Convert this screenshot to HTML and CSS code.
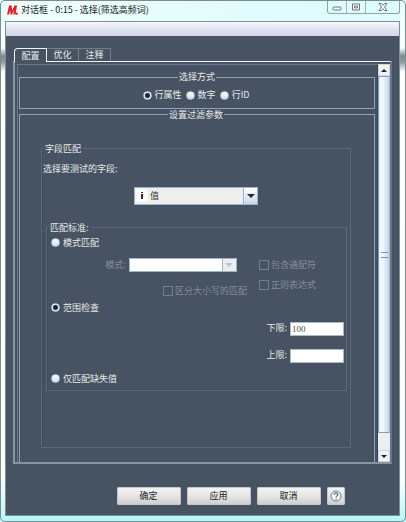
FILE: index.html
```
<!DOCTYPE html>
<html lang="zh-CN">
<head>
  <meta charset="UTF-8">
  <meta name="viewport" content="width=device-width, initial-scale=1.0">
  <title>对话框 - 0:15 - 选择(筛选高频词)</title>
  <link rel="stylesheet" href="styles.css">
</head>
<body>
  <header class="titlebar">
    <svg class="logo" width="11" height="11" viewBox="0 0 11 10">
      <path d="M2 0H4.600L5.100 5L7.500 0H10L8.600 9H6.200L7 4.500L5 9H3.600L3 4.500L2.200 9H0Z" fill="#d9202c"/>
      <circle cx="9.800" cy="8.200" r="1.100" fill="#d9202c"/>
    </svg>
    <h1>对话框 - 0:15 - 选择(筛选高频词)</h1>
    <div class="window-buttons">
      <button aria-label="最小化">
        <svg width="10" height="8" viewBox="0 0 10 8"><rect x="1" y="4" width="8" height="3" rx="1" fill="#fff" stroke="#6c7479"/></svg>
      </button>
      <button aria-label="最大化">
        <svg width="10" height="8" viewBox="0 0 10 8"><path d="M1.500 1h7v6h-7zM3.500 3v2h3V3z" fill="#fff" fill-rule="evenodd" stroke="#6c7479"/></svg>
      </button>
      <button class="close" aria-label="关闭">
        <svg width="10" height="8" viewBox="0 0 10 8"><path d="M1 .5h2.500L5 2.300 6.500.5H9L6.500 4 9 7.500H6.500L5 5.700 3.500 7.500H1L3.500 4z" fill="#fff" stroke="#6c7479"/></svg>
      </button>
    </div>
  </header>

  <main class="window">
    <div class="menubar"></div>

    <div class="tabs" role="tablist">
      <button class="tab active" role="tab" aria-selected="true">配置</button>
      <button class="tab" role="tab" aria-selected="false">优化</button>
      <button class="tab" role="tab" aria-selected="false">注释</button>
    </div>

    <div class="panel">
      <div class="pane">
        <fieldset class="group mode">
          <legend>选择方式</legend>
          <label><input type="radio" name="mode" checked>行属性</label>
          <label><input type="radio" name="mode">数字</label>
          <label><input type="radio" name="mode">行ID</label>
        </fieldset>

        <fieldset class="group filter">
          <legend>设置过滤参数</legend>

          <fieldset class="etched column-match">
            <legend>字段匹配</legend>
            <label class="column-label" for="column">选择要测试的字段:</label>
            <div class="combo column-combo">
              <svg class="type-icon" width="12" height="13" viewBox="0 0 12 13">
                <rect width="12" height="13" fill="#fafafa"/>
                <path d="M5 3h2v1H5zM5 5h2v5H5z" fill="#2d3032"/>
              </svg>
              <select id="column"><option>值</option></select>
              <span class="arrow"></span>
            </div>

            <fieldset class="etched criteria">
              <legend>匹配标准:</legend>
              <label class="choice"><input type="radio" name="criteria">模式匹配</label>
              <div class="pattern">
                <div class="pattern-left">
                  <div class="pattern-field">
                    <label for="pattern">模式:</label>
                    <div class="combo disabled">
                      <select id="pattern" disabled><option></option></select>
                      <span class="arrow"></span>
                    </div>
                  </div>
                  <label class="check"><input type="checkbox" disabled>区分大小写的匹配</label>
                </div>
                <div class="pattern-right">
                  <label class="check"><input type="checkbox" disabled>包含通配符</label>
                  <label class="check"><input type="checkbox" disabled>正则表达式</label>
                </div>
              </div>
              <label class="choice"><input type="radio" name="criteria" checked>范围检查</label>
              <div class="range">
                <label>下限: <input type="text" value="100"></label>
                <label>上限: <input type="text"></label>
              </div>
              <label class="choice"><input type="radio" name="criteria">仅匹配缺失值</label>
            </fieldset>
          </fieldset>
        </fieldset>
      </div>

      <div class="scrollbar">
        <button class="scroll-up" aria-label="向上"></button>
        <div class="thumb"></div>
        <button class="scroll-down" aria-label="向下"></button>
      </div>
    </div>

    <footer class="actions">
      <button>确定</button>
      <button>应用</button>
      <button>取消</button>
      <button class="help" aria-label="帮助">
        <svg width="12" height="12" viewBox="0 0 12 12" fill="none" stroke="#5b7186">
          <circle cx="6" cy="6" r="5" fill="#f4f8fb" stroke-width=".9"/>
          <path d="M4.200 4.700C4.200 2.400 8 2.500 7.900 4.600C7.800 5.800 6.200 5.700 6.100 7.200M6.100 8.200V9.400" stroke-width="1.300"/>
        </svg>
      </button>
    </footer>
  </main>
</body>
</html>
```
FILE: styles.css
```
* {
  box-sizing: border-box;
}

body {
  margin: 0;
  min-height: 100vh;
  display: flex;
  flex-direction: column;
  padding: 0 5px 5px 4px;
  border: 1px solid #7c8b8e;
  border-radius: 5px;
  background: linear-gradient(#e2fdfd, #f4ffff 30px, #f4ffff 48px, #7d8c93 56px, #8d9ba2 62px, #ffffff 72px, #fafdfd 480px, #b5f7fb);
  font-family: "Noto Sans CJK SC", "Noto Sans", sans-serif;
  font-size: 9px;
  line-height: 12px;
  color: #e6e9ec;
}

button,
input,
select {
  font: inherit;
  margin: 0;
  padding: 0;
}

/* title bar */
.titlebar {
  display: flex;
  height: 20px;
  padding-left: 2px;
  background: linear-gradient(90deg, #f2ffff, #e4fdfd 50%, #dcfcfd);
  color: #15191c;
}

.logo {
  margin-top: 4px;
}

.titlebar h1 {
  flex: 1;
  margin: 3px 0 0 3px;
  font-size: 9px;
  font-weight: normal;
}

.window-buttons {
  display: flex;
  height: 13px;
  border: 1px solid #93a1a5;
  border-top: none;
  border-radius: 0 0 3px 3px;
}

.window-buttons button {
  display: flex;
  width: 19px;
  align-items: center;
  justify-content: center;
  border: none;
  border-right: 1px solid #a4b4b8;
  background: none;
}

.window-buttons .close {
  width: 33px;
  border-right: none;
}

/* window body */
.window {
  flex: 1;
  display: flex;
  flex-direction: column;
  border: 1px solid #818d92;
  background: #475362;
}

.menubar {
  height: 14px;
  background: linear-gradient(#f8f9fb, #dfe2f0 50%, #d2d5e7);
}

.tabs {
  display: flex;
  margin: 12px 8px 0;
}

.tab {
  position: relative;
  width: 32px;
  height: 13px;
  border: 1px solid #71808e;
  border-left: none;
  border-bottom: none;
  background: #475362;
  color: #e6e9ec;
  line-height: 12px;
}

.tab.active {
  width: 33px;
  height: 14px;
  margin-bottom: -1px;
  border: 1px solid #f0f3f5;
  border-bottom: none;
  border-top-left-radius: 4px;
}

.panel {
  flex: 1;
  display: flex;
  margin: 0 7px;
  padding: 2px 0 0 2px;
  border: 2px solid #8496a4;
  border-top: 1px solid #f0f3f5;
  border-right-color: #667687;
}

.pane {
  flex: 1;
  display: flex;
  flex-direction: column;
  padding: 6px 2px 0 1px;
  border: 1px solid #65798c;
  border-bottom: none;
  border-right-color: #3b4654;
}

fieldset {
  min-width: 0;
  margin: 0;
}

.group {
  padding: 0;
  border: 1px solid #8ea4b6;
}

.group > legend {
  margin: 0 auto;
  padding: 0 1px;
}

.etched {
  border: 1px solid #5a6877;
  box-shadow: inset 1px 0 #404b59;
}

.etched > legend {
  padding: 0 2px;
}

.mode {
  padding: 6px 0 5px;
  text-align: center;
}

.mode label {
  display: inline-flex;
  align-items: center;
  margin-right: 2px;
}

.filter {
  flex: 1;
  padding: 22px 23px 14px 21px;
  border-bottom: none;
}

.column-match {
  padding: 8px 3px 56px 4px;
}

.column-match > legend,
.criteria > legend {
  margin-left: -3px;
}

.column-label {
  display: block;
  margin-left: -3px;
}

/* radio buttons and check boxes */
input[type="radio"] {
  appearance: none;
  width: 9px;
  height: 9px;
  margin-right: 3px;
  border: 1px solid #b4c7d6;
  border-radius: 50%;
  background: linear-gradient(#ffffff, #cfdeea);
}

input[type="radio"]:checked {
  background: radial-gradient(circle, #20262c 2px, #e6eff6 3px);
}

input[type="checkbox"] {
  appearance: none;
  width: 10px;
  height: 10px;
  margin-right: 2px;
  border: 1px solid #70818f;
}

.choice,
.check {
  display: flex;
  align-items: center;
}

.check,
.pattern-field {
  color: #858d96;
}

/* drop-downs */
.combo {
  display: flex;
  align-items: center;
  height: 18px;
  border: 1px solid #9eb5c8;
  background: #eeeeee;
  color: #303438;
}

.column-combo {
  width: 124px;
  margin: 12px auto 17px 88px;
}

.type-icon {
  margin-left: 1px;
}

.combo select {
  appearance: none;
  flex: 1;
  min-width: 0;
  height: 100%;
  padding-left: 2px;
  border: none;
  background: none;
  color: inherit;
}

.arrow {
  display: flex;
  align-items: center;
  justify-content: center;
  width: 14px;
  height: 100%;
  border-left: 1px solid #9eb5c8;
  background: linear-gradient(#ffffff, #c3d8e8);
}

.arrow::before {
  content: "";
  border: 4px solid transparent;
  border-top-color: #26292c;
  border-bottom: none;
}

.combo.disabled {
  width: 108px;
  height: 14px;
  background: #ffffff;
}

.combo.disabled .arrow {
  background: #eeeeee;
}

.combo.disabled .arrow::before {
  border-top-color: #b2c9dd;
}

/* matching criteria */
.criteria {
  padding: 3px 2px 5px 4px;
}

.pattern {
  display: flex;
  justify-content: flex-end;
  gap: 12px;
  padding: 9px 28px 5px 0;
}

.pattern-left {
  display: flex;
  flex-direction: column;
  align-items: flex-end;
  gap: 13px;
}

.pattern-field {
  display: flex;
  align-items: center;
  gap: 3px;
  margin-right: 10px;
}

.pattern-right {
  display: flex;
  flex-direction: column;
  gap: 8px;
  padding-top: 1px;
}

.range {
  display: flex;
  flex-direction: column;
  align-items: flex-end;
  gap: 13px;
  padding: 8px 0 10px;
}

.range label {
  display: flex;
  gap: 3px;
}

.range input {
  width: 54px;
  height: 14px;
  padding: 0 1px;
  border: 1px solid #a9b9c5;
  background: #ffffff;
  color: #4c4c4c;
  font-family: "Liberation Serif", serif;
}

/* scroll bar */
.scrollbar {
  display: flex;
  flex-direction: column;
  width: 12px;
  background: #eeeeee;
}

.scrollbar button {
  display: flex;
  align-items: center;
  justify-content: center;
  height: 12px;
  border: 1px solid #d0d8df;
  background: #f0f1f2;
}

.scroll-up::before,
.scroll-down::before {
  content: "";
  border: 3px solid transparent;
}

.scroll-up::before {
  border-bottom-color: #222222;
  border-top: none;
}

.scroll-down::before {
  border-top-color: #222222;
  border-bottom: none;
}

.thumb {
  flex: 1;
  display: flex;
  align-items: center;
  justify-content: center;
  margin-bottom: 17px;
  border: 1px solid #7f9dd0;
  border-right-color: #a8bacb;
  background: linear-gradient(90deg, #e4edf8, #f8fbff 30%, #c3d6e8);
}

.thumb::before {
  content: "";
  width: 7px;
  height: 4px;
  border: 1px solid #7590cb;
  border-width: 1px 0;
}

/* bottom buttons */
.actions {
  display: flex;
  justify-content: center;
  gap: 6px;
  padding: 23px 0 10px 56px;
}

.actions button {
  width: 64px;
  height: 18px;
  border: 1px solid #c4c7c9;
  border-radius: 1px;
  background: linear-gradient(#f4f4f4, #e6e6e6 50%, #cfcfcf);
  color: #15181a;
}

.actions .help {
  display: flex;
  align-items: center;
  justify-content: center;
  width: 18px;
}
```
